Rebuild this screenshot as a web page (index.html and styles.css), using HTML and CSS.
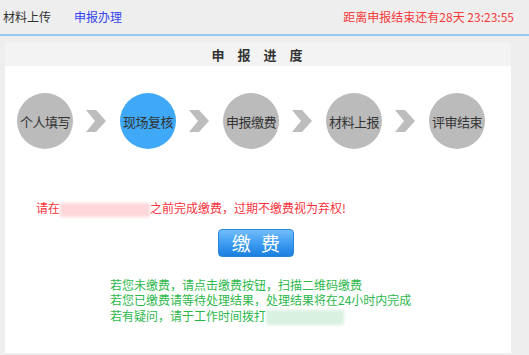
FILE: index.html
```html
<html lang="zh-CN">
<head>
    <meta charset="UTF-8">
    <meta name="viewport" content="width=device-width, initial-scale=1.0">
    <title>申报办理</title>
    <link rel="stylesheet" href="styles.css">
</head>
<body>
    <div class="topbar">
        <span class="tab">材料上传</span>
        <span class="tab tab-active">申报办理</span>
        <span class="countdown">距离申报结束还有28天 23:23:55</span>
    </div>

    <div class="panel">
        <div class="panel-title">申 报 进 度</div>
        <div class="panel-body">
            <div class="steps">
                <div class="step">个人填写</div>
                <svg class="arrow" viewBox="0 0 20 22"><polygon points="0,0 10,0 20,11 10,22 0,22 9,11"/></svg>
                <div class="step step-current">现场复核</div>
                <svg class="arrow" viewBox="0 0 20 22"><polygon points="0,0 10,0 20,11 10,22 0,22 9,11"/></svg>
                <div class="step">申报缴费</div>
                <svg class="arrow" viewBox="0 0 20 22"><polygon points="0,0 10,0 20,11 10,22 0,22 9,11"/></svg>
                <div class="step">材料上报</div>
                <svg class="arrow" viewBox="0 0 20 22"><polygon points="0,0 10,0 20,11 10,22 0,22 9,11"/></svg>
                <div class="step">评审结束</div>
            </div>

            <p class="warn">请在<span class="masked masked-red"></span>之前完成缴费，过期不缴费视为弃权!</p>

            <div class="pay-row">
                <button class="pay-btn">缴 费</button>
            </div>

            <div class="notes">
                <p>若您未缴费，请点击缴费按钮，扫描二维码缴费</p>
                <p>若您已缴费请等待处理结果，处理结果将在24小时内完成</p>
                <p>若有疑问，请于工作时间拨打<span class="masked masked-green"></span></p>
            </div>
        </div>
    </div>
</body>
</html>
```

FILE: styles.css
```css
* {
    box-sizing: border-box;
    margin: 0;
}
body {
    background: #eeeeee;
    font-family: "Noto Sans CJK SC", "Microsoft YaHei", sans-serif;
    font-size: 12px;
    color: #333;
}
.topbar {
    height: 36px;
    display: flex;
    align-items: center;
    padding: 0 15px 2px 3px;
    border-bottom: 2px solid #94caf2;
}
.tab {
    font-size: 12px;
    margin-right: 23px;
    color: #333;
}
.tab-active {
    color: #3342ee;
}
.countdown {
    margin-left: auto;
    color: #f63a3a;
    font-size: 12px;
}
.panel {
    width: 506px;
    margin: 7px 0 0 5px;
    background: #fff;
}
.panel-title {
    height: 23px;
    line-height: 23px;
    background: #f3f3f3;
    text-align: center;
    font-weight: bold;
    font-size: 13px;
    color: #333;
    letter-spacing: 2px;
    word-spacing: 6px;
}
.panel-body {
    height: 287px;
    padding-top: 27px;
}
.steps {
    display: flex;
    align-items: center;
    padding-left: 12px;
}
.step { /*the round progress bubbles*/
    width: 56px;
    height: 56px;
    border-radius: 50%;
    background: #bbbbbb;
    color: #333;
    font-size: 13px;
    display: flex;
    align-items: center;
    justify-content: center;
    white-space: nowrap;
    letter-spacing: -0.5px;
}
.step-current {
    background: #3fa9f7;
}
.arrow {
    width: 20px;
    height: 22px;
    margin: 0 14px 0 13px;
    fill: #bdbdbd;
}
.warn {
    color: #f8343c;
    margin: 51px 0 0 31px;
    line-height: 16px;
}
.masked {
    display: inline-block;
    vertical-align: middle;
    height: 14px;
    filter: blur(1.5px);
}
.masked-red {
    width: 90px;
    background: #ffd7da;
}
.masked-green {
    width: 78px;
    height: 15px;
    background: #d9f1e1;
}
.pay-row {
    padding-left: 213px;
    margin-top: 12px;
}
.pay-btn { /*blue pay button*/
    width: 76px;
    height: 28px;
    border: 1px solid #2b86d9;
    border-radius: 4px;
    background: linear-gradient(#72bdf9, #3a9af0 55%, #1b7fe0);
    color: #fff;
    font-family: "Noto Sans CJK SC", sans-serif;
    font-size: 19px;
    line-height: 24px;
    letter-spacing: 3px;
    padding: 0 0 0 3px;
}
.notes {
    margin: 20px 0 0 105px;
    color: #2db84c;
    line-height: 15.5px;
}
```
